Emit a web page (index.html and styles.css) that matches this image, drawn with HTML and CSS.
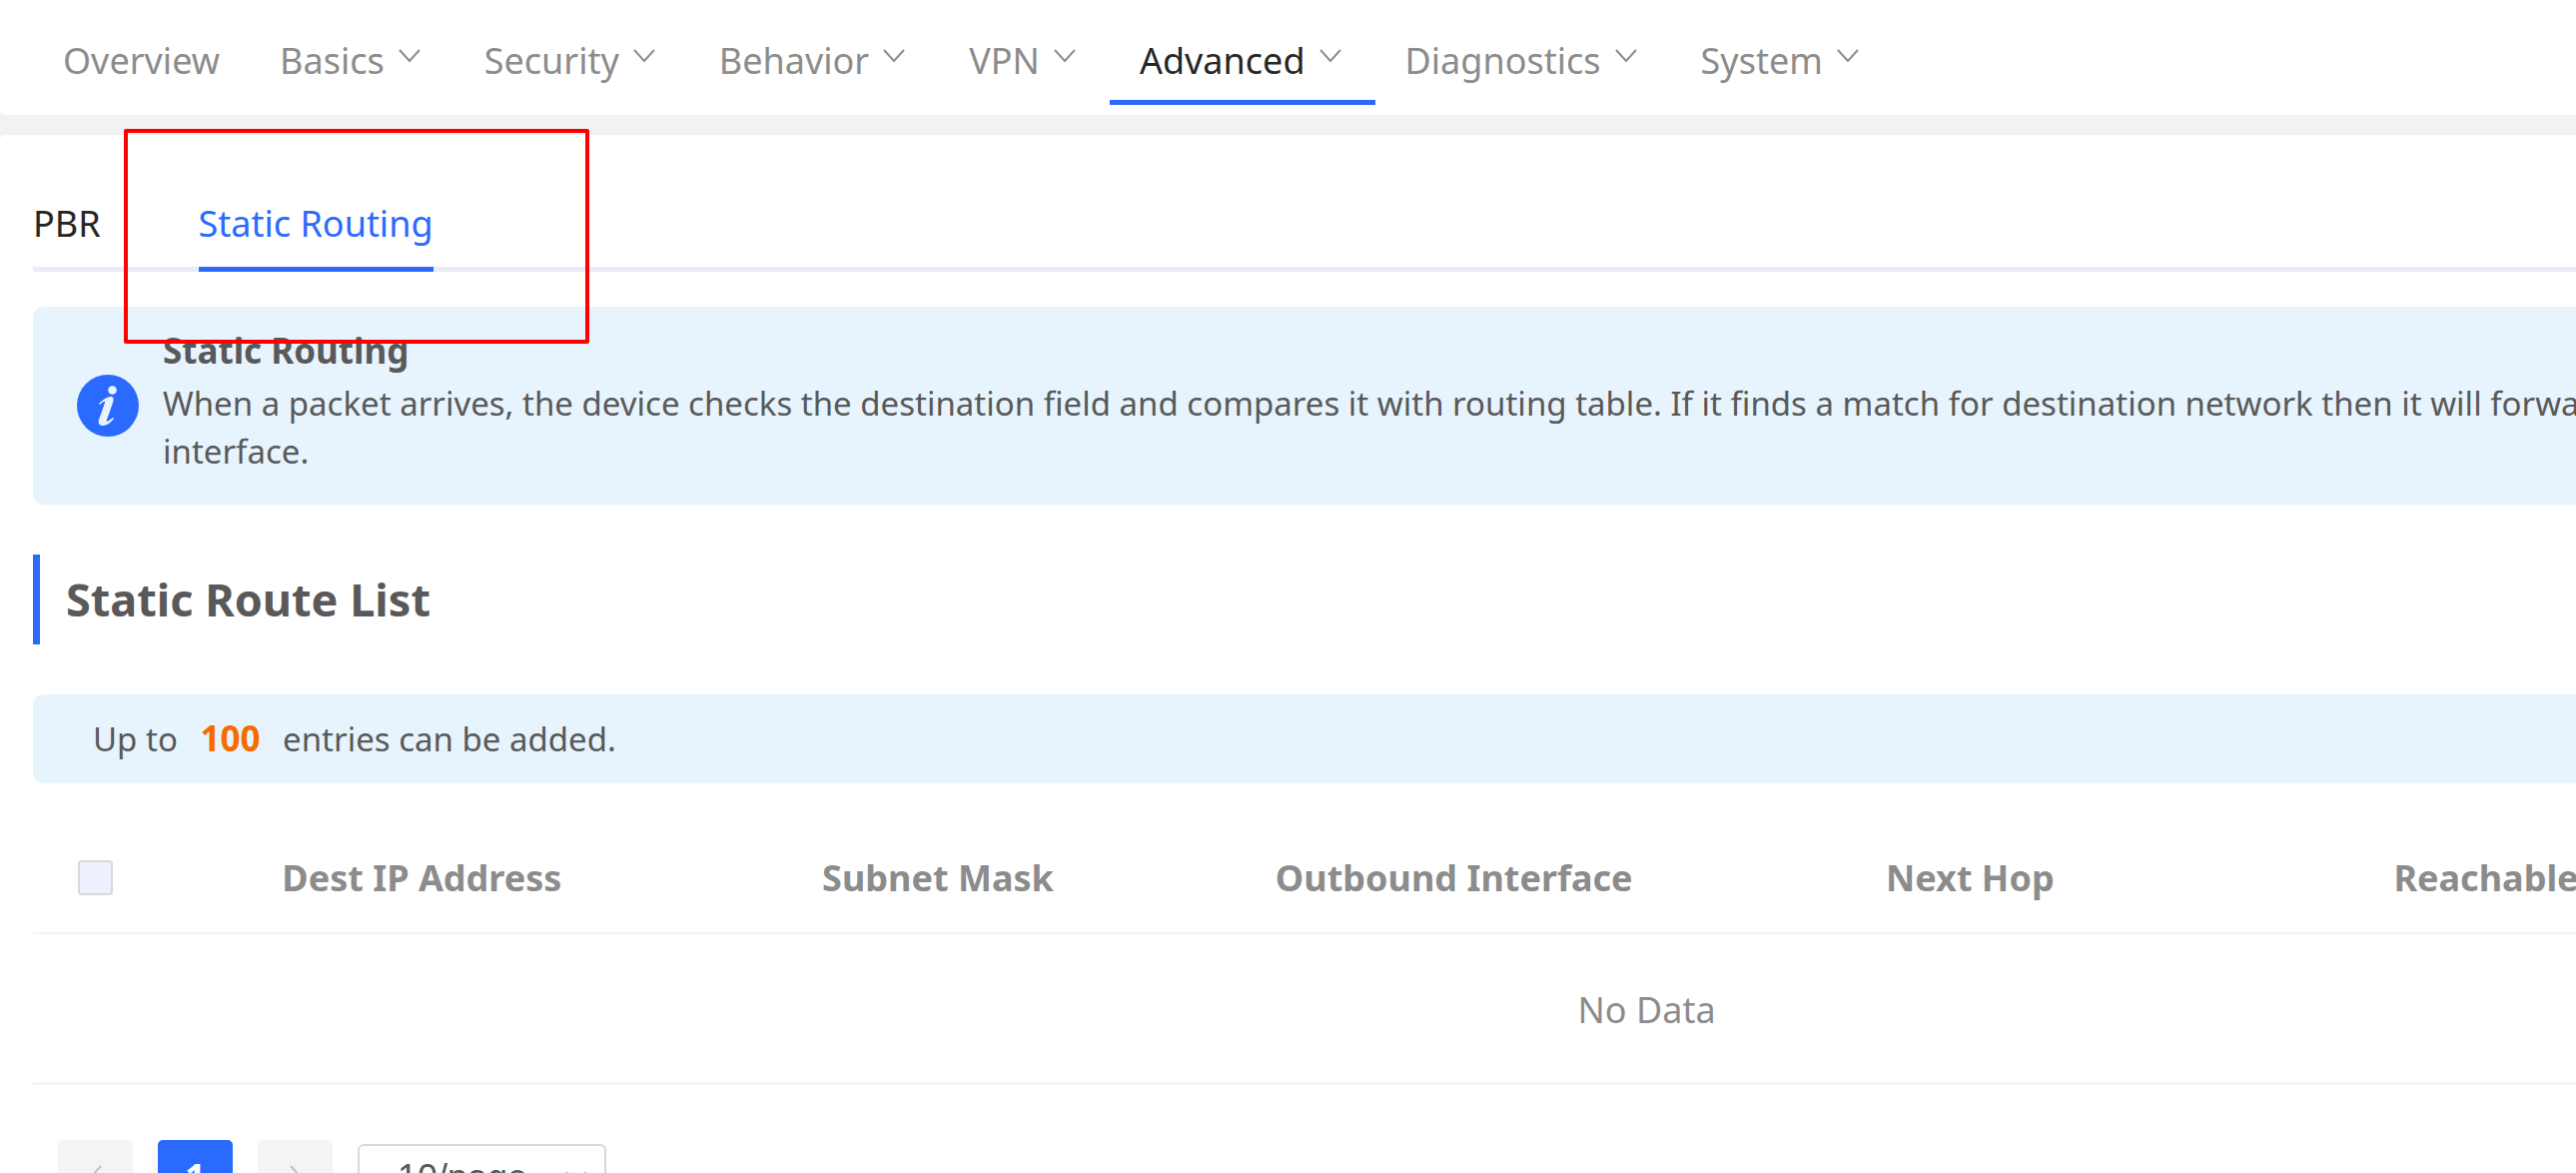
FILE: index.html
```html
<!DOCTYPE html>
<html lang="en">
	<head>
		<meta charset="UTF-8">
		<title>Static Routing</title>
		<link rel="stylesheet" href="styles.css">
	</head>
	<body>
		<div class="page">
			<nav class="nav">
				<a class="nav-item" href="#">Overview</a>
				<a class="nav-item" href="#">Basics<svg class="arrow" viewBox="0 0 22 14"><path d="M1 1l10 11L21 1"/></svg></a>
				<a class="nav-item" href="#">Security<svg class="arrow" viewBox="0 0 22 14"><path d="M1 1l10 11L21 1"/></svg></a>
				<a class="nav-item" href="#">Behavior<svg class="arrow" viewBox="0 0 22 14"><path d="M1 1l10 11L21 1"/></svg></a>
				<a class="nav-item" href="#">VPN<svg class="arrow" viewBox="0 0 22 14"><path d="M1 1l10 11L21 1"/></svg></a>
				<a class="nav-item active" href="#">Advanced<svg class="arrow" viewBox="0 0 22 14"><path d="M1 1l10 11L21 1"/></svg></a>
				<a class="nav-item" href="#">Diagnostics<svg class="arrow" viewBox="0 0 22 14"><path d="M1 1l10 11L21 1"/></svg></a>
				<a class="nav-item" href="#">System<svg class="arrow" viewBox="0 0 22 14"><path d="M1 1l10 11L21 1"/></svg></a>
			</nav>

			<main class="content">
				<div class="mark"></div>
				<div class="tabs">
					<a class="tab" href="#">PBR</a>
					<a class="tab active" href="#">Static Routing</a>
				</div>

				<div class="info">
					<svg class="info-icon" viewBox="0 0 62 62">
						<circle cx="31" cy="31" r="31" fill="#2b6aff"/>
						<circle cx="35.500" cy="15.500" r="4.300" fill="#e7f4fe"/>
						<path d="M22 29c4-4 8-7 12-7 3 0 3 2 2 6l-6 17c-1 3 1 2 6-2l1 1c-4 5-8 7-11 7-4 0-5-3-4-6l6-17c0-2-1-2-5 2z" fill="#e7f4fe"/>
					</svg>
					<div class="info-text">
						<h3>Static Routing</h3>
						<p>When a packet arrives, the device checks the destination field and compares it with routing table. If it finds a match for destination network then it will forward the packet through the specified interface.</p>
					</div>
				</div>

				<h2 class="title">Static Route List</h2>

				<p class="tip">Up to <b>100</b> entries can be added.</p>

				<table class="list">
					<thead>
						<tr>
							<th class="check"><input type="checkbox" aria-label="Select all"></th>
							<th>Dest IP Address</th>
							<th>Subnet Mask</th>
							<th>Outbound Interface</th>
							<th>Next Hop</th>
							<th>Reachable</th>
							<th>Action</th>
						</tr>
					</thead>
					<tbody>
						<tr>
							<td colspan="7">No Data</td>
						</tr>
					</tbody>
				</table>

				<div class="pager">
					<button class="page-btn" aria-label="Previous" disabled><svg viewBox="0 0 14 24"><path d="M12 1L2 12l10 11"/></svg></button>
					<button class="page-btn current">1</button>
					<button class="page-btn" aria-label="Next" disabled><svg viewBox="0 0 14 24"><path d="M2 1l10 11L2 23"/></svg></button>
					<div class="size">
						<select aria-label="Page size">
							<option>10/page</option>
						</select>
						<svg class="arrow" viewBox="0 0 22 14"><path d="M1 1l10 11L21 1"/></svg>
					</div>
				</div>
			</main>
		</div>
	</body>
</html>
```
FILE: styles.css
```css
*{
	box-sizing: border-box;
}
body{
	margin: 0;
	background-color: #f2f2f2;
	color: #595959;
	font-family: "Noto Sans", "Open Sans", sans-serif;
	font-size: 36px;
	line-height: 48px;
	overflow: hidden;
}
a{
	text-decoration: none;
}
.page{
	width: 128%;
}
.nav{
	display: flex;
	height: 115px;
	padding: 0 33px 10px;
	background-color: #fff;
	border-radius: 0 0 5px 5px;
}
.nav-item{
	display: flex;
	align-items: center;
	padding: 21px 30px 0;
	border-bottom: 5px solid transparent;
	color: #8c8c8c;
}
.nav-item.active{
	color: #262626;
	border-color: #2b6aff;
}
.arrow{
	width: 22px;
	height: 14px;
	margin: 0 4px 10px 14px;
	fill: none;
	stroke: #8c8c8c;
	stroke-width: 2;
}
.content{
	position: relative;
	margin-top: 20px;
	padding: 60px 37px 60px 33px;
	background-color: #fff;
	border-radius: 5px;
}
.mark{
	position: absolute;
	top: -6px;
	left: 124px;
	width: 466px;
	height: 215px;
	border: 4px solid #f00;
	border-radius: 2px;
}
.tabs{
	display: flex;
	gap: 98px;
	border-bottom: 5px solid #e9eef6;
}
.tab{
	height: 77px;
	margin-bottom: -5px;
	padding-top: 5px;
	border-bottom: 5px solid transparent;
	color: #262626;
}
.tab.active{
	color: #2b6aff;
	border-color: #2b6aff;
}
.info{
	display: flex;
	align-items: center;
	gap: 24px;
	margin-top: 35px;
	padding: 20px 44px 29px;
	background-color: #e7f4fe;
	border-radius: 10px;
}
.info-icon{
	width: 62px;
	height: 62px;
	margin-top: 8px;
	flex-shrink: 0;
}
.info h3{
	margin: 0 0 5px;
	font-size: 35px;
}
.info p{
	margin: 0;
	font-size: 33px;
}
.title{
	margin: 50px 0;
	padding-left: 26px;
	border-left: 7px solid #2b6aff;
	font-size: 45px;
	line-height: 90px;
}
.tip{
	margin: 0;
	padding: 20px 60px;
	background-color: #e7f4fe;
	border-radius: 10px;
	font-size: 33px;
}
.tip b{
	margin: 0 14px;
	color: #f56c00;
	font-size: 35px;
}
.list{
	width: 100%;
	margin-top: 40px;
	border-collapse: collapse;
	table-layout: fixed;
	color: #8c8c8c;
	text-align: center;
}
.list th{
	height: 110px;
	padding: 0;
	border-bottom: 2px solid #f0f3fa;
}
.list td{
	height: 150px;
	padding: 4px 0 0;
	border-bottom: 3px solid #f0f5fc;
}
.list .check{
	width: 131px;
	padding-left: 45px;
	text-align: left;
}
.check input{
	display: block;
	width: 35px;
	height: 35px;
	margin: 0;
	appearance: none;
	background-color: #edf1fd;
	border: 2px solid #d9d9d9;
	border-radius: 4px;
}
.pager{
	display: flex;
	align-items: center;
	gap: 25px;
	margin-top: 55px;
	padding-left: 25px;
}
.page-btn{
	width: 75px;
	height: 75px;
	padding: 0;
	border: 0;
	border-radius: 5px;
	background-color: #f4f4f4;
	font: inherit;
	font-weight: bold;
}
.page-btn svg{
	display: block;
	width: 14px;
	height: 24px;
	margin: auto;
	fill: none;
	stroke: #c0c0c0;
	stroke-width: 2;
}
.page-btn.current{
	background-color: #2b6aff;
	color: #fff;
}
.size{
	position: relative;
}
.size select{
	width: 249px;
	height: 67px;
	padding: 0 38px;
	appearance: none;
	background-color: #fff;
	border: 2px solid #d9d9d9;
	border-radius: 6px;
	color: #595959;
	font-family: "Liberation Sans", Arial, sans-serif;
	font-size: 36px;
}
.size .arrow{
	position: absolute;
	top: 27px;
	right: 19px;
	margin: 0;
	stroke: #c0c0c0;
}
```
